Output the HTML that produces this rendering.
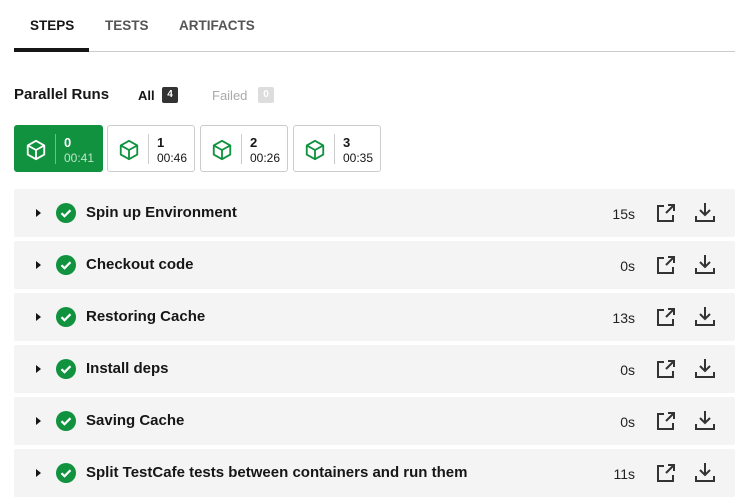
<html><head><style>
*{margin:0;padding:0;box-sizing:border-box}
body{width:750px;height:502px;background:#fff;font-family:"Liberation Sans",Arial,sans-serif;position:relative;overflow:hidden;color:#161616}
.a{position:absolute}
.tab{position:absolute;top:18px;font-size:13.5px;font-weight:bold;color:#555}
.box{position:absolute;top:125px;height:47px;border:1px solid #ccc;border-radius:3px;background:#fff}
.box .sep{position:absolute;left:40px;top:8px;width:1px;height:30px;background:#ccc}
.box .n{position:absolute;left:49px;top:9px;font-size:13px;font-weight:bold}
.box .t{position:absolute;left:49px;top:25px;font-size:12px}
.box svg{position:absolute;left:10px;top:13px}
.row{position:absolute;left:14px;width:721px;height:48px;background:#f4f4f4;border-radius:2px}
.row .tri{position:absolute;left:22px;top:20px;width:0;height:0;border-left:5px solid #161616;border-top:4px solid transparent;border-bottom:4px solid transparent}
.row .chk{position:absolute;left:42px;top:14px}
.row .lbl{position:absolute;left:72px;top:15px;font-size:15px;font-weight:bold}
.row .dur{position:absolute;right:100px;top:17px;font-size:14px;color:#222}
.row .ext{position:absolute;left:642px;top:14px}
.row .dl{position:absolute;left:680px;top:12px}
</style></head><body>
<div class="tab" style="left:30px;color:#161616">STEPS</div>
<div class="tab" style="left:105px">TESTS</div>
<div class="tab" style="left:179px">ARTIFACTS</div>
<div class="a" style="left:14px;top:51px;width:721px;height:1px;background:#ccc"></div>
<div class="a" style="left:14px;top:48px;width:75px;height:4px;background:#161616"></div>
<div class="a" style="left:14px;top:86px;font-size:15px;font-weight:bold">Parallel Runs</div>
<div class="a" style="left:138px;top:88px;font-size:13px;font-weight:bold">All</div>
<div class="a" style="left:162px;top:87px;width:16px;height:16px;background:#333;border-radius:2px;color:#fff;font-size:10px;text-align:center;line-height:16px;font-weight:bold">4</div>
<div class="a" style="left:212px;top:88px;font-size:13px;color:#aaa">Failed</div>
<div class="a" style="left:258px;top:87px;width:16px;height:16px;background:#ddd;border-radius:2px;color:#fff;font-size:10px;text-align:center;line-height:16px;font-weight:bold">0</div>

<div class="box" style="left:14px;width:89px;background:#10923f;border-color:#10923f;color:#fff">
<svg width="22" height="22" viewBox="0 0 24 24" fill="none" stroke="#fff" stroke-width="2" stroke-linejoin="round"><path d="M12 2l9 5v10l-9 5-9-5V7z"/><path d="M3 7l9 5 9-5M12 12v10"/></svg>
<div class="sep" style="background:#6cbf88"></div><div class="n">0</div><div class="t" style="color:#bfe5cb">00:41</div></div>
<div class="box" style="left:107px;width:88px"><svg width="22" height="22" viewBox="0 0 24 24" fill="none" stroke="#10923f" stroke-width="2" stroke-linejoin="round"><path d="M12 2l9 5v10l-9 5-9-5V7z"/><path d="M3 7l9 5 9-5M12 12v10"/></svg><div class="sep"></div><div class="n">1</div><div class="t">00:46</div></div>
<div class="box" style="left:200px;width:88px"><svg width="22" height="22" viewBox="0 0 24 24" fill="none" stroke="#10923f" stroke-width="2" stroke-linejoin="round"><path d="M12 2l9 5v10l-9 5-9-5V7z"/><path d="M3 7l9 5 9-5M12 12v10"/></svg><div class="sep"></div><div class="n">2</div><div class="t">00:26</div></div>
<div class="box" style="left:293px;width:88px"><svg width="22" height="22" viewBox="0 0 24 24" fill="none" stroke="#10923f" stroke-width="2" stroke-linejoin="round"><path d="M12 2l9 5v10l-9 5-9-5V7z"/><path d="M3 7l9 5 9-5M12 12v10"/></svg><div class="sep"></div><div class="n">3</div><div class="t">00:35</div></div>

<div class="row" style="top:189px"><div class="tri"></div><svg class="chk" width="20" height="20" viewBox="0 0 20 20"><circle cx="10" cy="10" r="10" fill="#10923f"/><path d="M5.5 10.2l3 3 6-6" stroke="#fff" stroke-width="2.2" fill="none"/></svg><div class="lbl">Spin up Environment</div><div class="dur">15s</div><svg class="ext" width="20" height="20" viewBox="0 0 20 20" fill="none" stroke="#333" stroke-width="2"><path d="M8 3H2v15h15v-6M12 2h6v6M18 2l-8 8"/></svg><svg class="dl" width="22" height="22" viewBox="0 0 22 22" fill="none" stroke="#333" stroke-width="2"><path d="M11 2v12M6 9l5 5 5-5M2 15v5h18v-5"/></svg></div>
<div class="row" style="top:241px"><div class="tri"></div><svg class="chk" width="20" height="20" viewBox="0 0 20 20"><circle cx="10" cy="10" r="10" fill="#10923f"/><path d="M5.5 10.2l3 3 6-6" stroke="#fff" stroke-width="2.2" fill="none"/></svg><div class="lbl">Checkout code</div><div class="dur">0s</div><svg class="ext" width="20" height="20" viewBox="0 0 20 20" fill="none" stroke="#333" stroke-width="2"><path d="M8 3H2v15h15v-6M12 2h6v6M18 2l-8 8"/></svg><svg class="dl" width="22" height="22" viewBox="0 0 22 22" fill="none" stroke="#333" stroke-width="2"><path d="M11 2v12M6 9l5 5 5-5M2 15v5h18v-5"/></svg></div>
<div class="row" style="top:293px"><div class="tri"></div><svg class="chk" width="20" height="20" viewBox="0 0 20 20"><circle cx="10" cy="10" r="10" fill="#10923f"/><path d="M5.5 10.2l3 3 6-6" stroke="#fff" stroke-width="2.2" fill="none"/></svg><div class="lbl">Restoring Cache</div><div class="dur">13s</div><svg class="ext" width="20" height="20" viewBox="0 0 20 20" fill="none" stroke="#333" stroke-width="2"><path d="M8 3H2v15h15v-6M12 2h6v6M18 2l-8 8"/></svg><svg class="dl" width="22" height="22" viewBox="0 0 22 22" fill="none" stroke="#333" stroke-width="2"><path d="M11 2v12M6 9l5 5 5-5M2 15v5h18v-5"/></svg></div>
<div class="row" style="top:345px"><div class="tri"></div><svg class="chk" width="20" height="20" viewBox="0 0 20 20"><circle cx="10" cy="10" r="10" fill="#10923f"/><path d="M5.5 10.2l3 3 6-6" stroke="#fff" stroke-width="2.2" fill="none"/></svg><div class="lbl">Install deps</div><div class="dur">0s</div><svg class="ext" width="20" height="20" viewBox="0 0 20 20" fill="none" stroke="#333" stroke-width="2"><path d="M8 3H2v15h15v-6M12 2h6v6M18 2l-8 8"/></svg><svg class="dl" width="22" height="22" viewBox="0 0 22 22" fill="none" stroke="#333" stroke-width="2"><path d="M11 2v12M6 9l5 5 5-5M2 15v5h18v-5"/></svg></div>
<div class="row" style="top:397px"><div class="tri"></div><svg class="chk" width="20" height="20" viewBox="0 0 20 20"><circle cx="10" cy="10" r="10" fill="#10923f"/><path d="M5.5 10.2l3 3 6-6" stroke="#fff" stroke-width="2.2" fill="none"/></svg><div class="lbl">Saving Cache</div><div class="dur">0s</div><svg class="ext" width="20" height="20" viewBox="0 0 20 20" fill="none" stroke="#333" stroke-width="2"><path d="M8 3H2v15h15v-6M12 2h6v6M18 2l-8 8"/></svg><svg class="dl" width="22" height="22" viewBox="0 0 22 22" fill="none" stroke="#333" stroke-width="2"><path d="M11 2v12M6 9l5 5 5-5M2 15v5h18v-5"/></svg></div>
<div class="row" style="top:449px"><div class="tri"></div><svg class="chk" width="20" height="20" viewBox="0 0 20 20"><circle cx="10" cy="10" r="10" fill="#10923f"/><path d="M5.5 10.2l3 3 6-6" stroke="#fff" stroke-width="2.2" fill="none"/></svg><div class="lbl">Split TestCafe tests between containers and run them</div><div class="dur">11s</div><svg class="ext" width="20" height="20" viewBox="0 0 20 20" fill="none" stroke="#333" stroke-width="2"><path d="M8 3H2v15h15v-6M12 2h6v6M18 2l-8 8"/></svg><svg class="dl" width="22" height="22" viewBox="0 0 22 22" fill="none" stroke="#333" stroke-width="2"><path d="M11 2v12M6 9l5 5 5-5M2 15v5h18v-5"/></svg></div>
</body></html>
